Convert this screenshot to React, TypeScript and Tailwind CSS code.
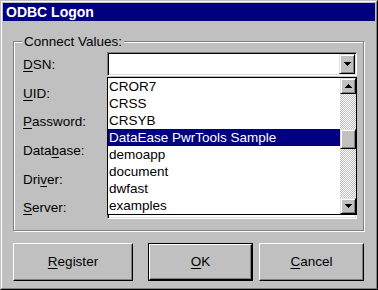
import React from "react";

const Arrow = ({ up }: { up?: boolean }) => (
  <svg width="7" height="4" viewBox="0 0 7 4" shapeRendering="crispEdges">
    <path
      d={up ? "M3 0h1v1h1v1h1v1h1v1H0V3h1V2h1V1h1z" : "M0 0H7V1H6V2H5V3H4V4H3V3H2V2H1V1H0z"}
      fill="black"
    />
  </svg>
);

const btnSmall =
  "bg-[#c0c0c0] border border-t-[#dfdfdf] border-l-[#dfdfdf] border-r-black border-b-black shadow-[inset_1px_1px_0_#ffffff,inset_-1px_-1px_0_#808080] flex items-center justify-center";

const field =
  "h-[24px] w-[250px] bg-white border border-t-[#808080] border-l-[#808080] border-r-white border-b-white shadow-[inset_1px_1px_0_#000000,inset_-1px_-1px_0_#dfdfdf]";

const U = ({ children }: { children: React.ReactNode }) => (
  <span className="underline underline-offset-[2px] decoration-1">{children}</span>
);

const items = ["CROR7", "CRSS", "CRSYB", "DataEase PwrTools Sample", "demoapp", "document", "dwfast", "examples"];

export default function App() {
  const rows: { label: React.ReactNode; cls: string }[] = [
    { label: <><U>D</U>SN:</>, cls: "" },
    { label: <><U>U</U>ID:</>, cls: "mt-[5px]" },
    { label: <><U>P</U>assword:</>, cls: "mt-[4px]" },
    { label: <>Data<U>b</U>ase:</>, cls: "mt-[5px]" },
    { label: <>Dri<U>v</U>er:</>, cls: "mt-[5px]" },
    { label: <><U>S</U>erver:</>, cls: "mt-[4px]" },
  ];
  return (
    <div
      className="w-[378px] h-[290px] bg-[#c0c0c0] border border-t-[#c0c0c0] border-l-[#c0c0c0] border-r-black border-b-black text-black text-[13.5px] leading-none"
      style={{ fontFamily: '"Liberation Sans", Arial, sans-serif' }}
    >
      <div className="w-full h-full border border-t-white border-l-white border-r-[#808080] border-b-[#808080] p-[1px] flex flex-col">
        <div className="h-[18px] bg-[#000080] text-white font-bold text-[14px] pl-[3px] flex items-center">
          ODBC Logon
        </div>

        <div className="relative mt-[20px] ml-[10px] w-[351px] h-[190px] border border-[#808080] shadow-[inset_1px_1px_0_#ffffff,1px_1px_0_#ffffff]">
          <div className="absolute left-[8px] top-[-8px] bg-[#c0c0c0] px-[2px] h-[15px] flex items-center">
            Connect Values:
          </div>

          <div className="pt-[10px] pl-[9px] flex flex-col">
            {rows.map((r, i) => (
              <div key={i} className={"flex items-center " + r.cls}>
                <div className="w-[84px] pt-[2px]">{r.label}</div>
                {i === 0 ? (
                  <div className={field + " flex justify-end p-[1px]"}>
                    <div className={btnSmall + " w-[16px] h-[20px]"}>
                      <Arrow />
                    </div>
                  </div>
                ) : (
                  <div className={field} />
                )}
              </div>
            ))}
          </div>

          <div className="absolute left-[93px] top-[35px] w-[250px] h-[138px] bg-white border border-black flex">
            <div className="flex-1 flex flex-col">
              {items.map((t, i) => (
                <div
                  key={t}
                  className={
                    i === 3
                      ? "h-[17px] flex items-center pl-[1px] bg-[#000080] text-white"
                      : "h-[17px] flex items-center pl-[1px]"
                  }
                >
                  {t}
                </div>
              ))}
            </div>
            <div className="w-[16px] flex flex-col">
              <div className={btnSmall + " w-[16px] h-[16px]"}>
                <Arrow up />
              </div>
              <div className="flex-1 flex flex-col bg-[image:repeating-conic-gradient(#c0c0c0_0%_25%,#ffffff_0%_50%)] bg-[length:2px_2px]">
                <div className="h-[35px]" />
                <div className={btnSmall + " w-[16px] h-[20px]"} />
              </div>
              <div className={btnSmall + " w-[16px] h-[16px]"}>
                <Arrow />
              </div>
            </div>
          </div>
        </div>

        <div className="flex mt-[12px] ml-[10px]">
          <div className="w-[120px] h-[38px] bg-[#c0c0c0] border border-t-white border-l-white border-r-black border-b-black shadow-[inset_-1px_-1px_0_#808080] flex items-center justify-center">
            <span><U>R</U>egister</span>
          </div>
          <div className="ml-[15px] w-[105px] h-[38px] border border-black">
            <div className="w-full h-full bg-[#c0c0c0] border border-t-white border-l-white border-r-black border-b-black shadow-[inset_-1px_-1px_0_#808080] flex items-center justify-center">
              <span><U>O</U>K</span>
            </div>
          </div>
          <div className="ml-[6px] w-[105px] h-[38px] bg-[#c0c0c0] border border-t-white border-l-white border-r-black border-b-black shadow-[inset_-1px_-1px_0_#808080] flex items-center justify-center">
            <span><U>C</U>ancel</span>
          </div>
        </div>
      </div>
    </div>
  );
}
